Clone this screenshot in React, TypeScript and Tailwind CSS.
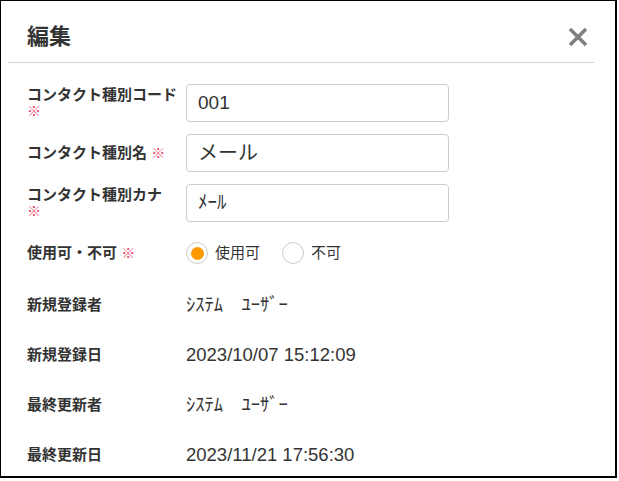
const font = "font-['Liberation_Sans','Noto_Sans_CJK_JP',sans-serif]"

function Req() {
  return <span className="text-[#ee3d66] font-normal text-[14px]">※</span>
}

function Label({ text, req, wrap }: { text: string; req?: boolean; wrap?: boolean }) {
  return (
    <div className="w-[185px] shrink-0 pl-[26px] pr-[6px] text-[15px] leading-[16px] font-bold text-[#333]">
      {text}
      {req && (wrap ? <div><Req /></div> : <> <Req /></>)}
    </div>
  )
}

function Field({ label, value, req, wrap, big }: { label: string; value: string; req?: boolean; wrap?: boolean; big?: boolean }) {
  return (
    <div className="flex items-center h-[38px]">
      <Label text={label} req={req} wrap={wrap} />
      <div className={`w-[263px] h-[38px] border border-[#ccc] rounded-[4px] px-[11px] flex items-center text-[#333] ${big ? 'text-[20px]' : 'text-[19px]'}`}>
        {value}
      </div>
    </div>
  )
}

function Info({ label, value }: { label: string; value: string }) {
  return (
    <div className="flex items-center h-[38px]">
      <Label text={label} />
      <div className="text-[18.5px] text-[#333]">{value}</div>
    </div>
  )
}

function Radio({ checked, text }: { checked?: boolean; text: string }) {
  return (
    <label className="flex items-center gap-[7px]">
      <span className="w-[22px] h-[22px] rounded-full border border-[#ccc] flex items-center justify-center bg-white">
        {checked && <span className="w-[13px] h-[13px] rounded-full bg-[#ff9900]" />}
      </span>
      <span className="text-[15px] text-[#333]">{text}</span>
    </label>
  )
}

export default function App() {
  return (
    <div className={`${font} w-[617px] h-[478px] bg-white border border-black border-r-2 border-b-2 overflow-hidden`}>
      <div className="h-[61px] pt-[10px] pl-[26px] pr-[27px] flex items-center justify-between">
        <h1 className="text-[22px] font-bold text-[#333]">編集</h1>
        <svg width="20" height="20" viewBox="0 0 20 20">
          <path d="M2 2L18 18M18 2L2 18" stroke="#7f7f7f" strokeWidth="3.5" />
        </svg>
      </div>
      <div className="ml-[7px] w-[586px] h-px bg-[#d3d3d3]" />

      <div className="pt-[21px] flex flex-col gap-[12px]">
        <Field label="コンタクト種別コード" value="001" req wrap />
        <Field label="コンタクト種別名" value="メール" req big />
        <Field label="コンタクト種別カナ" value="ﾒｰﾙ" req wrap />
        <div className="flex items-center h-[38px]">
          <Label text="使用可・不可" req />
          <div className="flex items-center gap-[22px]">
            <Radio checked text="使用可" />
            <Radio text="不可" />
          </div>
        </div>
        <div className="mt-[2px] flex flex-col gap-[12px]">
          <Info label="新規登録者" value="ｼｽﾃﾑ　ﾕｰｻﾞｰ" />
          <Info label="新規登録日" value="2023/10/07 15:12:09" />
          <Info label="最終更新者" value="ｼｽﾃﾑ　ﾕｰｻﾞｰ" />
          <Info label="最終更新日" value="2023/11/21 17:56:30" />
        </div>
      </div>
    </div>
  )
}
